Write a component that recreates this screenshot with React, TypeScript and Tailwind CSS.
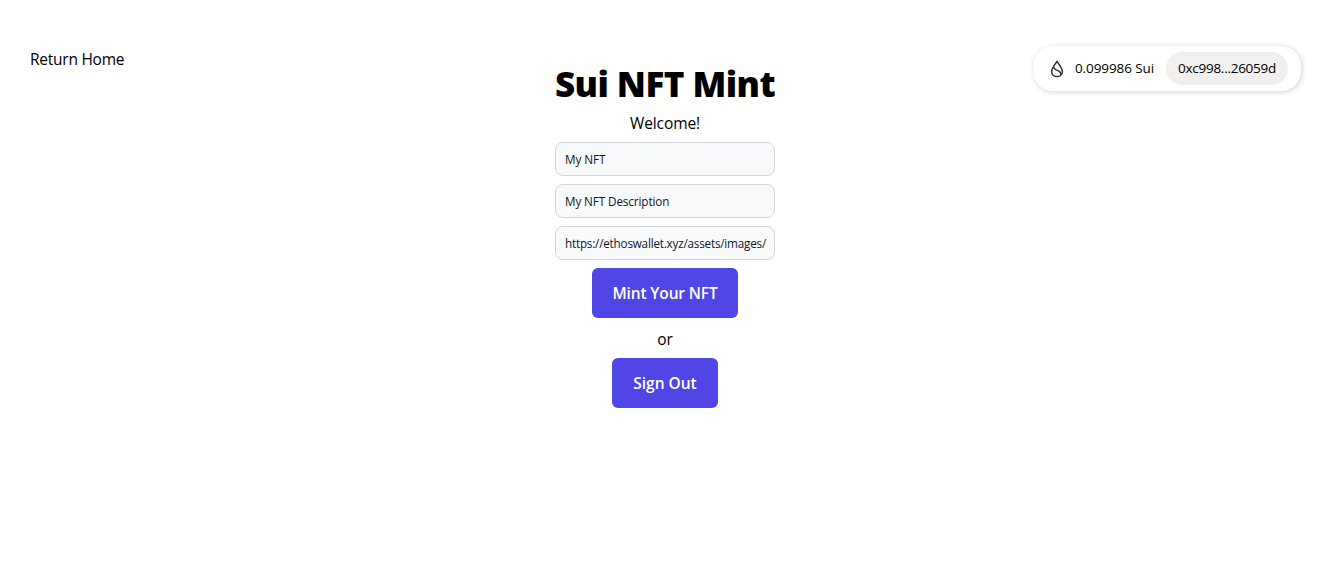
import { useState } from "react";

const SuiIcon = () => (
  <svg width="14" height="18" viewBox="0 0 14 18" fill="none" stroke="#2c2b3b" strokeWidth="1.5" strokeLinejoin="round">
    <path d="M7 1.3C8.5 4 12.3 8 12.3 11.4C12.3 14.5 10 16.6 7 16.6C4 16.6 1.7 14.5 1.7 11.4C1.7 8 5.5 4 7 1.3Z" />
    <path d="M3.8 6.6C3.6 9 5.2 9.6 7.4 10.4C9.8 11.3 11.2 12.4 10.6 14.8" />
  </svg>
);

export default function App() {
  const [form, setForm] = useState({
    name: "My NFT",
    description: "My NFT Description",
    image: "https://ethoswallet.xyz/assets/images/",
  });

  return (
    <div className="min-h-screen bg-white text-black font-['Segoe_UI','Open_Sans',sans-serif] flex justify-between items-start pl-[30px] pr-10">
      {/* Home link */}
      <div className="w-[267px] pt-[47px]">
        <a href="#" className="block w-max text-[15.5px] leading-6 tracking-[-0.25px]">
          Return Home
        </a>
      </div>

      {/* Mint form */}
      <div className="w-[220px] pt-[62px] flex flex-col items-center gap-2">
        <h1 className="h-10 pt-0.5 text-[35px] leading-10 font-extrabold tracking-[-0.55px] whitespace-nowrap">Sui NFT Mint</h1>
        <p className="h-6 pt-px text-[15.5px] leading-6 tracking-[-0.1px]">Welcome!</p>

        <input
          type="text"
          value={form.name}
          className="w-full h-[34px] pl-[9px] pr-1.5 rounded-lg border border-gray-300 bg-gray-50 text-[11.7px] tracking-[-0.05px] text-gray-900 outline-none"
          onChange={(e) => setForm({ ...form, name: e.target.value })}
        />
        <input
          type="text"
          value={form.description}
          className="w-full h-[34px] pl-[9px] pr-1.5 rounded-lg border border-gray-300 bg-gray-50 text-[11.7px] tracking-[-0.1px] text-gray-900 outline-none"
          onChange={(e) => setForm({ ...form, description: e.target.value })}
        />
        <input
          type="text"
          value={form.image}
          className="w-full h-[34px] pl-[9px] pr-1.5 rounded-lg border border-gray-300 bg-gray-50 text-[11.7px] tracking-[-0.2px] text-gray-900 outline-none"
          onChange={(e) => setForm({ ...form, image: e.target.value })}
        />

        <button className="w-[146px] h-[50px] pt-px rounded-md bg-[#4f46e5] text-white text-[15.5px] font-semibold tracking-[-0.15px] whitespace-nowrap">
          Mint Your NFT
        </button>
        <p className="h-6 pt-px text-[15.5px] leading-6">or</p>
        <button className="w-[106px] h-[50px] pt-px rounded-md bg-[#4f46e5] text-white text-[15.5px] font-semibold whitespace-nowrap">
          Sign Out
        </button>
      </div>

      {/* Wallet */}
      <div className="w-[268px] h-[45px] mt-[46px] flex items-center rounded-[20px] bg-white pl-[17px] shadow-[1px_1px_4px_1px_rgba(0,0,0,0.13)]">
        <SuiIcon />
        <span className="w-[80px] ml-[11px] text-[13.5px] tracking-[-0.1px] whitespace-nowrap">0.099986 Sui</span>
        <button className="w-[122px] h-[33px] ml-[11px] rounded-full bg-[#f2f0ef] text-[13.5px] tracking-[-0.27px] whitespace-nowrap">
          0xc998...26059d
        </button>
      </div>
    </div>
  );
}
